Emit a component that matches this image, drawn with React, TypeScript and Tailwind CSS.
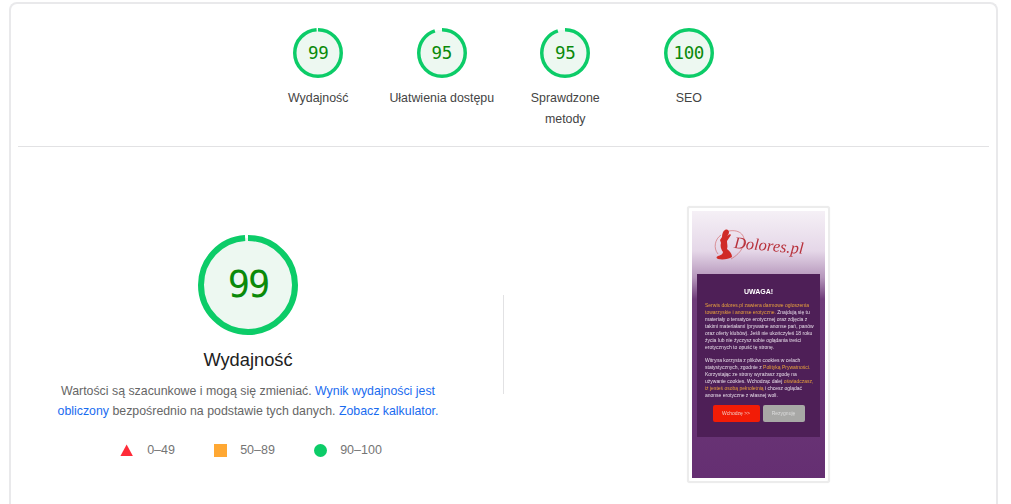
import React from 'react';

const Gauge = ({ score, big }: { score: number; big?: boolean }) => {
  const size = big ? 100 : 50;
  const stroke = big ? 6 : 3.5;
  const r = (size - stroke) / 2;
  return (
    <div className={big ? 'relative w-[100px] h-[100px]' : 'relative w-[50px] h-[50px]'}>
      <svg width={size} height={size} className="-rotate-90">
        <circle cx={size / 2} cy={size / 2} r={r} fill="#edf8f1" />
        <circle
          cx={size / 2}
          cy={size / 2}
          r={r}
          fill="none"
          stroke="#0ccc68"
          strokeWidth={stroke}
          pathLength={100}
          strokeDasharray={`${score} ${100 - score}`}
        />
      </svg>
      <div
        className={
          big
            ? 'absolute inset-0 flex items-center justify-center font-["DejaVu_Sans_Mono",monospace] text-[37px] tracking-[-2px] text-[#0a8a0a]'
            : 'absolute inset-0 flex items-center justify-center font-["DejaVu_Sans_Mono",monospace] text-[17.5px] tracking-[-0.3px] text-[#0a8a0a]'
        }
      >
        {score}
      </div>
    </div>
  );
};

const categories = [
  { score: 99, label: 'Wydajność' },
  { score: 95, label: 'Ułatwienia dostępu' },
  { score: 95, label: 'Sprawdzone metody' },
  { score: 100, label: 'SEO' },
];

const Thumbnail = () => (
  <div className="w-[143px] h-[277px] rounded-[3px] border-2 border-[#ececec] bg-white p-[3px] shadow-[0_0_1px_rgba(0,0,0,0.1)]">
    <div className="h-full bg-[linear-gradient(#f5f0f6_0%,#e5d7e8_15%,#b596bb_25%,#6f3c7a_33%,#652f72_100%)] px-[5px] blur-[0.3px]">
      <div className="h-[63px] flex items-center justify-center pr-[2px] pt-[7px]">
        <svg width="36" height="34" viewBox="0 0 36 34" className="mr-[-14px] shrink-0">
          <path d="M17 2C28 0 35 7 31 17 29 23 24 27 19 30" fill="none" stroke="#cf5a5c" strokeWidth="0.6" />
          <path d="M9 6C3 10 1 19 6 25" fill="none" stroke="#cf5a5c" strokeWidth="0.6" />
          <path
            d="M13 1c2-1 4 0 4 2s-1 3-2 4l3-2 1 1-4 6c0 3 1 5 0 8 3 2 5 5 5 8-3 2-9 3-14 2-2-1-2-2 0-3 3-1 5-2 5-4-2-3-3-6-2-9l-1-3 2-3c0-3 1-6 3-7z"
            fill="#d02a26"
          />
        </svg>
        <span className='font-["Liberation_Serif",serif] italic text-[16.5px] leading-none text-[#b8323c] rotate-[5deg]'>
          Dolores.pl
        </span>
      </div>
      <div className="h-[163px] bg-[#4e1f57] px-[8px] pt-[13px] font-['Liberation_Sans',sans-serif] text-[5px] leading-[7px] text-[#e6dce8] whitespace-nowrap">
        <div className="text-center text-[7px] leading-[9px] font-bold text-white mb-[6px]">UWAGA!</div>
        <div className="text-[#e8a13c]">Serwis dolores.pl zawiera darmowe ogłoszenia</div>
        <div><span className="text-[#e8a13c]">towarzyskie i anonse erotyczne.</span> Znajdują się tu</div>
        <div>materiały o tematyce erotycznej oraz zdjęcia z</div>
        <div>takimi materiałami (prywatne anonse pań, panów</div>
        <div>oraz oferty klubów). Jeśli nie ukończyłeś 18 roku</div>
        <div>życia lub nie życzysz sobie oglądania treści</div>
        <div>erotycznych to opuść tę stronę.</div>
        <div className="mt-[6px]">Witryna korzysta z plików cookies w celach</div>
        <div>statystycznych, zgodnie z <span className="text-[#e8a13c]">Polityką Prywatności.</span></div>
        <div>Korzystając ze strony wyrażasz zgodę na</div>
        <div>używanie cookies. Wchodząc dalej <span className="text-[#e8a13c]">oświadczasz,</span></div>
        <div><span className="text-[#e8a13c]">iż jesteś osobą pełnoletnią</span> i chcesz oglądać</div>
        <div>anonse erotyczne z własnej woli.</div>
        <div className="flex justify-center gap-[3px] mt-[6px]">
          <div className="w-[47px] h-[17px] rounded-[2px] bg-[#f21c06] flex items-center justify-center text-[#f3c9c0]">Wchodzę &gt;&gt;</div>
          <div className="w-[42px] h-[17px] rounded-[2px] bg-[#a8a8a6] flex items-center justify-center text-[#dcdcdc]">Rezygnuję</div>
        </div>
      </div>
    </div>
  </div>
);

export default function App() {
  return (
    <div className="h-[504px] overflow-hidden bg-white pt-[2px] px-[9px] font-['Liberation_Sans',sans-serif]">
      <div className="h-[520px] w-[989px] rounded-t-[8px] border-2 border-b-0 border-[#e9e9eb] px-[7px]">
        <div className="flex justify-center h-[142px] pt-[24px]">
          {categories.map(cat => (
            <div key={cat.label} className="w-[123.5px] flex flex-col items-center">
              <Gauge score={cat.score} />
              <div className="mt-[10px] w-[112px] text-center text-[12.4px] leading-[21px] text-[#444]">{cat.label}</div>
            </div>
          ))}
        </div>
        <div className="h-px bg-[#e2e2e4]" />
        <div className="flex">
          <div className="w-[460px] pt-[88px] flex flex-col items-center">
            <Gauge score={99} big />
            <h2 className="mt-[13px] text-[18.3px] leading-[24px] text-[#212121]">Wydajność</h2>
            <div className="mt-[9px] text-center text-[12.35px] leading-[20px] text-[#666] whitespace-nowrap">
              <div>Wartości są szacunkowe i mogą się zmieniać. <span className="text-[#1a6cf0]">Wynik wydajności jest</span></div>
              <div><span className="text-[#1a6cf0]">obliczony</span> bezpośrednio na podstawie tych danych. <span className="text-[#1a6cf0]">Zobacz kalkulator.</span></div>
            </div>
            <div className="mt-[20px] ml-[6px] flex items-center text-[12.5px] text-[#757575]">
              <div className="flex items-center w-[94px]">
                <div className="w-[13px] h-[12px] bg-[#ff2b38] [clip-path:polygon(50%_0,100%_100%,0_100%)]" />
                <span className="ml-[14px]">0–49</span>
              </div>
              <div className="flex items-center w-[100px]">
                <div className="w-[13px] h-[13px] bg-[#ffa833]" />
                <span className="ml-[13px]">50–89</span>
              </div>
              <div className="flex items-center">
                <div className="w-[13px] h-[13px] rounded-full bg-[#0ccc68]" />
                <span className="ml-[13px]">90–100</span>
              </div>
            </div>
          </div>
          <div className="ml-[25px] mt-[148px] w-px h-[99px] bg-[#e2e2e4]" />
          <div className="ml-[183px] mt-[59px]">
            <Thumbnail />
          </div>
        </div>
      </div>
    </div>
  );
}
